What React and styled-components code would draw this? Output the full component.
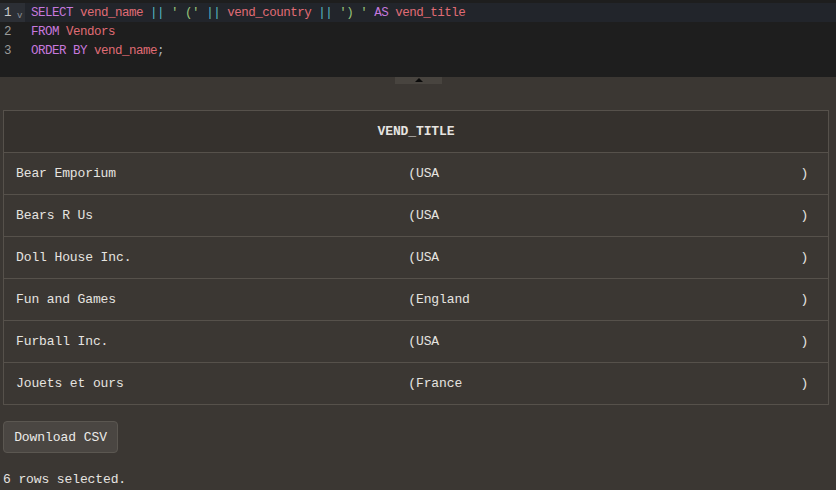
import React from 'react';
import styled, { createGlobalStyle } from 'styled-components';

const GlobalStyle = createGlobalStyle`
  html, body {
    margin: 0;
    padding: 0;
    background: #3b3733;
  }
  body {
    width: 836px;
    height: 490px;
    overflow: hidden;
    font-family: 'Liberation Mono', 'DejaVu Sans Mono', monospace;
  }
`;

const Page = styled.div`
  display: flex;
  flex-direction: column;
  width: 836px;
  height: 490px;
  background: #3b3733;
`;

const Editor = styled.div`
  background: #1e1e1e;
  height: 77px;
  padding-top: 3px;
  box-sizing: border-box;
  font-family: 'Liberation Mono', monospace;
  font-size: 12.5px;
  letter-spacing: -0.5px;
`;

const CodeLine = styled.div`
  display: flex;
  height: 19px;
  line-height: 21px;
  background: ${({ active }) => (active ? '#22252b' : 'transparent')};
`;

const Gutter = styled.div`
  position: relative;
  width: 25px;
  flex: none;
  padding-left: 4px;
  box-sizing: border-box;
  color: ${({ active }) => (active ? '#c8c8c8' : '#9a9a9a')};
  background: ${({ active }) => (active ? '#2c2f35' : 'transparent')};
`;

const Fold = styled.span`
  position: absolute;
  left: 17px;
  top: 3px;
  font-size: 9px;
  color: #8a8f98;
`;

const Code = styled.div`
  padding-left: 6px;
  white-space: pre;
  color: #abb2bf;
`;

const Tok = styled.span`
  color: ${({ kind }) =>
    ({ kw: '#c678dd', id: '#e06c75', op: '#56b6c2', str: '#98c379' }[kind] || '#abb2bf')};
`;

const Splitter = styled.div`
  display: flex;
  justify-content: center;
  height: 33px;
  padding-left: 1px;
`;

const Handle = styled.div`
  width: 47px;
  height: 7px;
  background: #48443f;
  display: flex;
  justify-content: center;
  padding-top: 1px;
  box-sizing: border-box;

  &::after {
    content: '';
    width: 0;
    height: 0;
    border-left: 4px solid transparent;
    border-right: 4px solid transparent;
    border-bottom: 4px solid #0a0a0a;
  }
`;

const Results = styled.div`
  padding: 0 7px 0 3px;
  color: #e6e4e0;
  font-size: 13px;
  letter-spacing: -0.11px;
`;

const Footer = styled(Results)`
  display: flex;
  flex-direction: column;
`;

const Table = styled.table`
  width: 100%;
  border-collapse: collapse;
  border: 1px solid #56514b;
`;

const HeadCell = styled.th`
  height: 41px;
  padding: 0;
  background: #35312d;
  border-bottom: 1px solid #56514b;
  font-weight: bold;
  text-align: center;
`;

const Cell = styled.td`
  height: 41px;
  padding: 0 12px;
  border-bottom: 1px solid #56514b;
  white-space: pre;
`;

const Button = styled.button`
  align-self: flex-start;
  margin-top: 16px;
  width: 115px;
  height: 32px;
  padding: 0;
  background: #4a4642;
  border: 1px solid #5b5751;
  border-radius: 4px;
  color: #ecebe8;
  font-family: 'Liberation Mono', monospace;
  font-size: 13px;
  letter-spacing: -0.075px;
`;

const Status = styled.div`
  margin-top: 19px;
  line-height: 16px;
`;

const vendors = [
  ['Bear Emporium', 'USA'],
  ['Bears R Us', 'USA'],
  ['Doll House Inc.', 'USA'],
  ['Fun and Games', 'England'],
  ['Furball Inc.', 'USA'],
  ['Jouets et ours', 'France'],
];

const lines = [
  [
    ['kw', 'SELECT'], ['', ' '], ['id', 'vend_name'], ['', ' '], ['op', '||'], ['', ' '],
    ['str', "' ('"], ['', ' '], ['op', '||'], ['', ' '], ['id', 'vend_country'], ['', ' '],
    ['op', '||'], ['', ' '], ['str', "') '"], ['', ' '], ['kw', 'AS'], ['', ' '], ['id', 'vend_title'],
  ],
  [['kw', 'FROM'], ['', ' '], ['id', 'Vendors']],
  [['kw', 'ORDER BY'], ['', ' '], ['id', 'vend_name'], ['', ';']],
];

const App = () => (
  <Page>
    <GlobalStyle />
    <Editor>
      {lines.map((toks, i) => (
        <CodeLine key={i} active={i === 0}>
          <Gutter active={i === 0}>
            {i + 1}
            {i === 0 && <Fold>v</Fold>}
          </Gutter>
          <Code>
            {toks.map(([kind, text], j) => (
              <Tok key={j} kind={kind}>{text}</Tok>
            ))}
          </Code>
        </CodeLine>
      ))}
    </Editor>
    <Splitter>
      <Handle />
    </Splitter>
    <Results>
      <Table>
        <thead>
          <tr>
            <HeadCell>VEND_TITLE</HeadCell>
          </tr>
        </thead>
        <tbody>
          {vendors.map(([name, country]) => (
            <tr key={name}>
              <Cell>{`${name.padEnd(50)} (${country.padEnd(50)}) `}</Cell>
            </tr>
          ))}
        </tbody>
      </Table>
    </Results>
    <Footer>
      <Button>Download CSV</Button>
      <Status>6 rows selected.</Status>
    </Footer>
  </Page>
);

export default App;
